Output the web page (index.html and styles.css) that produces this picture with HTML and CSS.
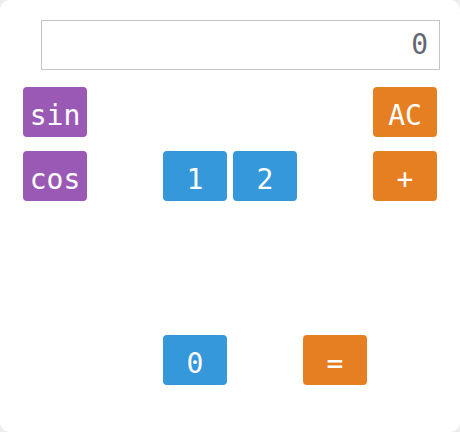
FILE: index.html
```html
<!DOCTYPE html>
<html>
<head>
<meta charset="utf-8">
<link rel="stylesheet" href="styles.css">
</head>
<body>
<div class="calc">
  <div class="display">0</div>
  <div class="keys">
    <button class="key fn k-sin">sin</button>
    <button class="key op k-ac">AC</button>
    <button class="key fn k-cos">cos</button>
    <button class="key num k-1">1</button>
    <button class="key num k-2">2</button>
    <button class="key op k-plus">+</button>
    <button class="key num k-0">0</button>
    <button class="key op k-eq">=</button>
  </div>
</div>
</body>
</html>
```
FILE: styles.css
```css
html, body {
  margin: 0;
  padding: 0;
  background: #eeeeee;
}
.calc {
  box-sizing: border-box;
  width: 460px;
  height: 432px;
  background: #ffffff;
  border-radius: 10px;
  padding: 20px 20px 0 23px;
  font-family: "DejaVu Sans Mono", monospace;
}
.display {
  box-sizing: border-box;
  margin-left: 18px;
  height: 50px;
  border: 1px solid #c2c5c9;
  padding: 0 11px;
  text-align: right;
  font-size: 28px;
  line-height: 48px;
  color: #636775;
}
.keys {
  margin-top: 17px;
  display: grid;
  grid-template-columns: repeat(6, 64px);
  grid-template-rows: 50px 50px 106px 50px;
  column-gap: 6px;
  row-gap: 14px;
}
.key {
  border: none;
  border-radius: 4px;
  color: #ffffff;
  font-family: "DejaVu Sans Mono", monospace;
  font-size: 28px;
  padding: 6px 0 0 0;
  margin: 0;
  line-height: normal;
}
.fn { background: #9b59b6; }
.num { background: #3498db; }
.op { background: #e67e22; }
.k-sin { grid-column: 1; grid-row: 1; }
.k-ac { grid-column: 6; grid-row: 1; }
.k-cos { grid-column: 1; grid-row: 2; }
.k-1 { grid-column: 3; grid-row: 2; }
.k-2 { grid-column: 4; grid-row: 2; }
.k-plus { grid-column: 6; grid-row: 2; }
.k-0 { grid-column: 3; grid-row: 4; }
.k-eq { grid-column: 5; grid-row: 4; }
```
